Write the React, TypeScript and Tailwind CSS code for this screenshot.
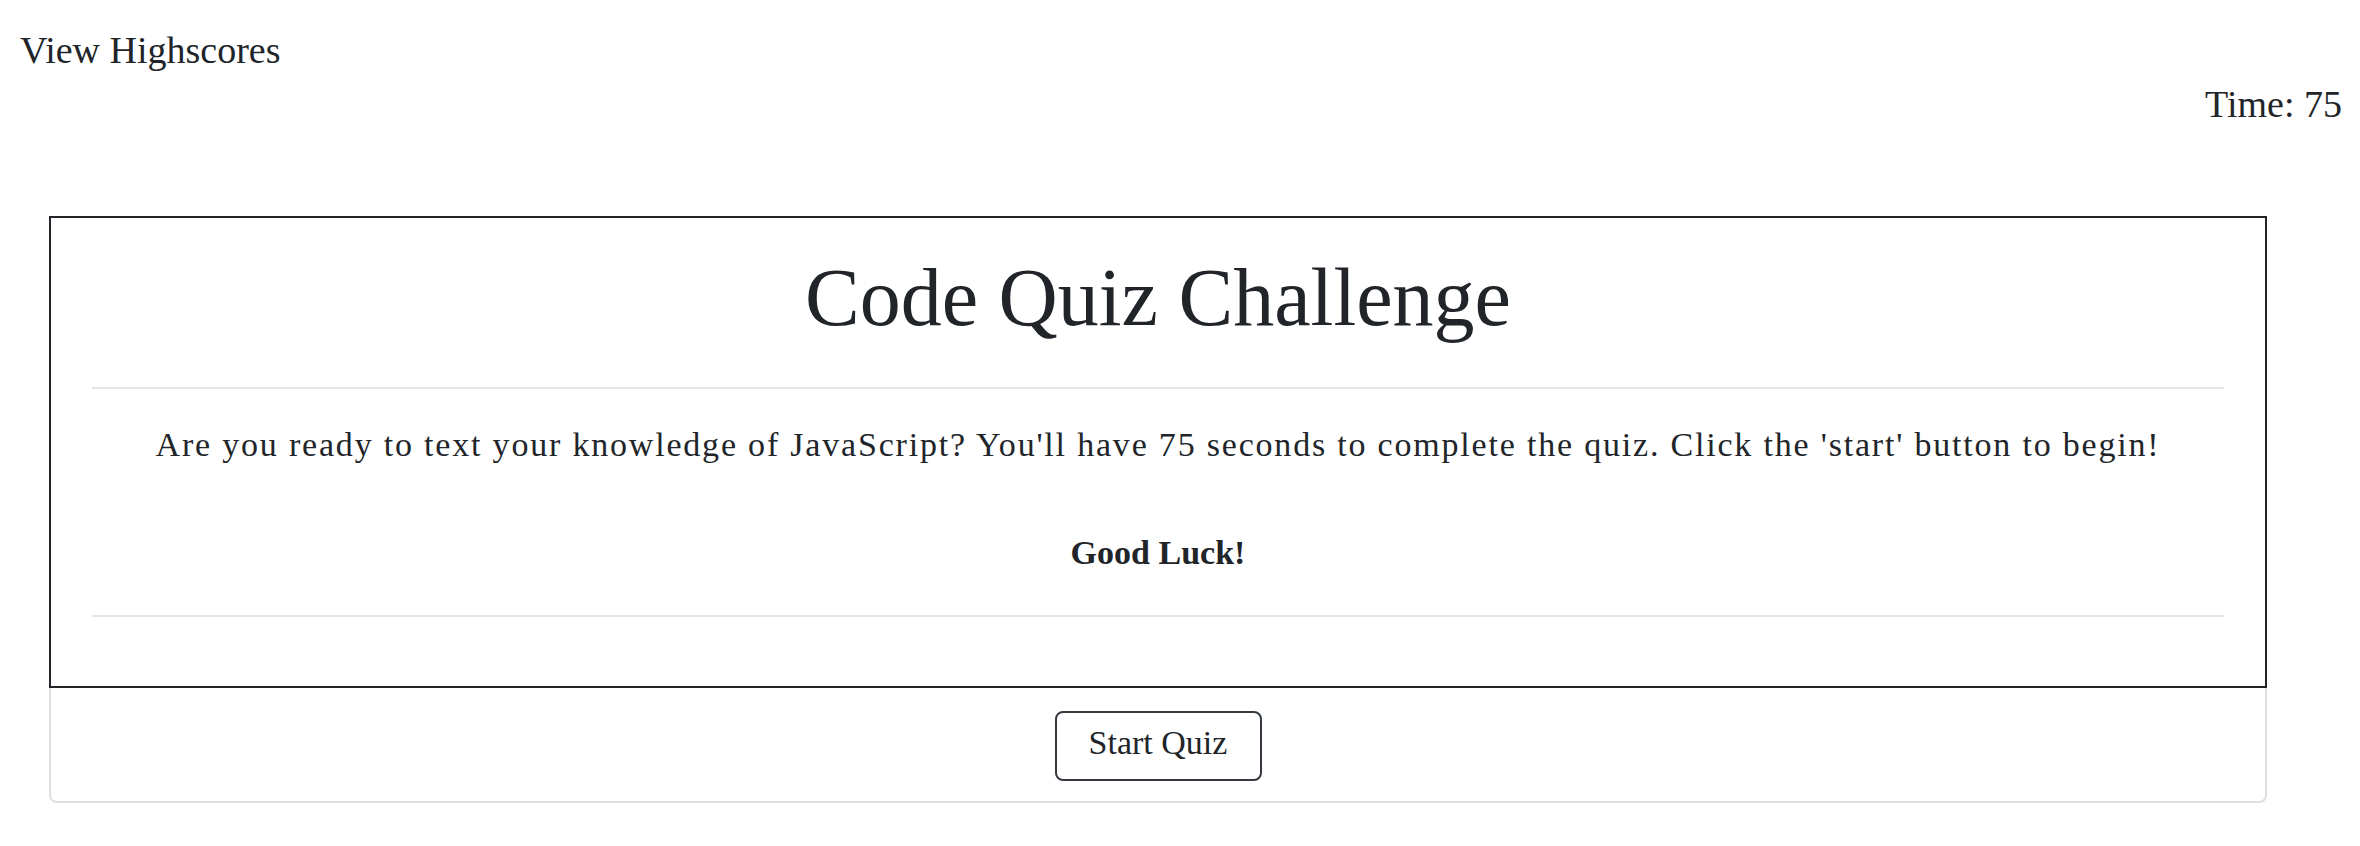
export default function App() {
  return (
    <div className="min-h-screen bg-white text-[#212529] font-['Liberation_Serif',serif]">
      <header className="pt-[27px]">
        <a href="#" className="block pl-[20px] text-[38px] leading-[46px]">
          View Highscores
        </a>
        <div className="mt-[8px] pr-[18px] text-right text-[38px] leading-[46px]">Time: 75</div>
      </header>

      <main className="mt-[89px] ml-[49px] w-[2218px] flex flex-col">
        <div className="border-2 border-[#212529] px-[41px] pt-[31px] pb-[69px] text-center">
          <h1 className="text-[82px] leading-[98px]">Code Quiz Challenge</h1>
          <hr className="mt-[40px] h-[2px] border-0 bg-[#e4e4e4]" />
          <p className="mt-[30px] text-[34px] leading-[51px] tracking-[1.8px]">
            Are you ready to text your knowledge of JavaScript? You'll have 75 seconds to complete the quiz. Click
            the 'start' button to begin!
          </p>
          <p className="mt-[57px] text-[34px] leading-[51px] font-bold">Good Luck!</p>
          <hr className="mt-[37px] h-[2px] border-0 bg-[#e4e4e4]" />
        </div>
        <div className="flex justify-center border-x-2 border-b-2 border-[#dfdfdf] rounded-b-[8px] pt-[23px] pb-[20px]">
          <button className="w-[207px] border-2 border-[#343a40] rounded-[8px] pt-[4px] pb-[11px] text-[34px] leading-[51px] text-[#212529]">
            Start Quiz
          </button>
        </div>
      </main>
    </div>
  );
}
